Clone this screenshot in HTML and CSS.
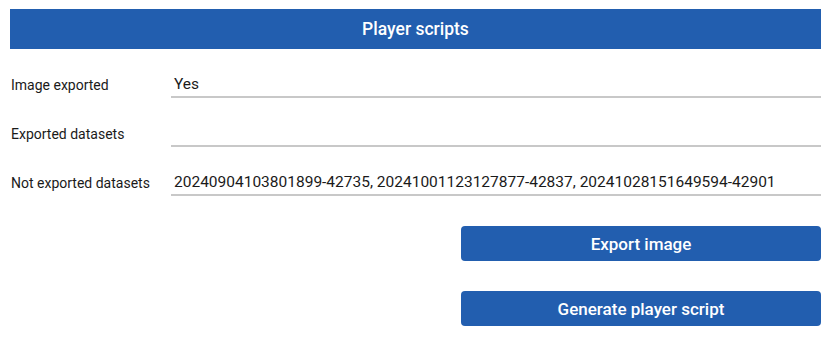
FILE: index.html
```html
<!DOCTYPE html>
<html lang="en">
<head>
    <meta charset="UTF-8">
    <meta name="viewport" content="width=device-width, initial-scale=1.0">
    <title>Player scripts</title>
    <link rel="stylesheet" href="styles.css">
</head>
<body>
    <div id="panel">
        <div class="header">Player scripts</div>
        <div class="row">
            <div class="label">Image exported</div>
            <div class="value">Yes</div>
        </div>
        <div class="row">
            <div class="label">Exported datasets</div>
            <div class="value"></div>
        </div>
        <div class="row">
            <div class="label">Not exported datasets</div>
            <div class="value">20240904103801899-42735, 20241001123127877-42837, 20241028151649594-42901</div>
        </div>
        <div class="actions">
            <div class="button">Export image</div>
            <div class="button">Generate player script</div>
        </div>
    </div>
</body>
</html>
```

FILE: styles.css
```css
body {
    margin: 0;
    padding: 9px 9px 0 10px;
    background-color: #fff;
    font-family: Roboto, "Liberation Sans", sans-serif;
    color: #1a1a1a;
}
#panel {
    width: 811px;
}
.header {
    height: 40px;
    display: flex;
    justify-content: center;
    align-items: center;
    background-color: #225eaf;
    color: #fff;
    font-size: 17.5px;
    font-weight: 500;
}
.row {
    display: flex;
    align-items: flex-end;
    height: 49px;
}
.label {
    width: 160px;
    flex-shrink: 0;
    font-size: 14px;
    padding-bottom: 5px;
    padding-left: 1px;
}
.value {
    flex: 1;
    height: 18px;
    line-height: 18px;
    font-size: 15.5px;
    padding: 0 0 3px 3px;
    border-bottom: 2px solid #c8c8c8;
    white-space: nowrap;
}
.actions {
    display: flex;
    flex-direction: column;
    align-items: flex-end;
    gap: 30px;
    padding-top: 30px;
}
.button {
    width: 360px;
    height: 35px;
    display: flex;
    justify-content: center;
    align-items: center;
    border-radius: 4px;
    background-color: #225eaf;
    color: #fff;
    font-size: 17px;
    font-weight: 500;
    cursor: pointer;
}
```
